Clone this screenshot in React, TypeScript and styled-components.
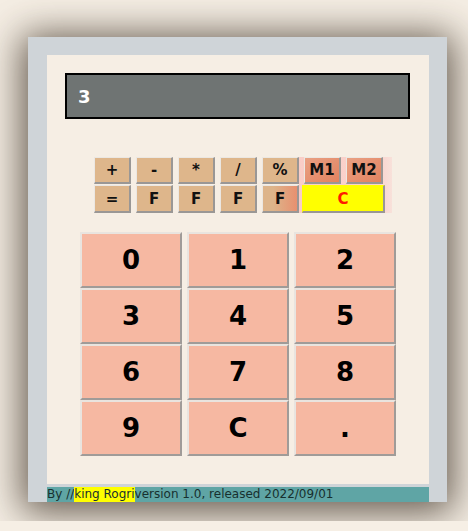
import React from "react";
import styled, { createGlobalStyle, css } from "styled-components";

const Global = createGlobalStyle`
  html, body { margin: 0; padding: 0; background: #f6efe5; }
  body { font-family: "DejaVu Sans", sans-serif; }
`;

const Stage = styled.div`
  height: 521px;
  box-sizing: border-box;
  padding: 37px 0 0 28px;
  overflow: hidden;
  background: #f5eee4;
`;

const Frame = styled.div`
  width: 419px;
  height: 465px;
  box-sizing: border-box;
  padding: 18px 18px 0 19px;
  background: #cfd4d8;
  box-shadow: 0 4px 36px 6px rgba(50, 38, 25, 0.75);
  display: flex;
  flex-direction: column;
`;

const Panel = styled.div`
  height: 429px;
  background: #f6eee4;
  box-sizing: border-box;
  padding: 18px 0 0 18px;
  display: flex;
  flex-direction: column;
`;

const Display = styled.div`
  width: 345px;
  height: 46px;
  box-sizing: border-box;
  border: 2px solid #000;
  background: #6f7473;
  color: #fff;
  font-weight: bold;
  font-size: 18px;
  display: flex;
  align-items: center;
  padding-left: 11px;
`;

const Ops = styled.div`
  margin: 38px 0 0 29px;
  width: 298px;
  box-sizing: border-box;
  padding-right: 9px;
  display: grid;
  grid-template-columns: repeat(7, 37px);
  grid-template-rows: 27px 28px;
  column-gap: 5px;
  row-gap: 1px;
  background: linear-gradient(
    to right,
    transparent 0 205px,
    #f9cdc7 205px,
    #fad3cd 285px,
    #f8e1da 298px
  );
`;

const bevel = css`
  box-sizing: border-box;
  border-style: solid;
  border-width: 1px 2px 2px 1px;
  border-color: #ebe7e2 #9a9795 #9a9795 #ebe7e2;
  display: flex;
  align-items: center;
  justify-content: center;
  font-weight: bold;
  font-family: "DejaVu Sans", sans-serif;
`;

const OpKey = styled.div<{ $tone?: "tan" | "mix" | "mem" }>`
  ${bevel};
  font-size: 15px;
  color: #111;
  background: ${(p) =>
    p.$tone === "mem"
      ? "linear-gradient(to bottom right, #e9a184, #e3825f)"
      : p.$tone === "mix"
      ? "linear-gradient(to right, #ddb48a 30%, #e8906f)"
      : "#deb68b"};
`;

const ClearKey = styled.div`
  ${bevel};
  grid-column: 6 / span 2;
  margin-left: -2px;
  margin-right: -2px;
  border-color: #ffff00 #9a9795 #9a9795 #ffff00;
  background: #ffff00;
  color: #ff1a00;
  font-size: 15px;
`;

const Pad = styled.div`
  margin: 19px 0 0 15px;
  display: grid;
  grid-template-columns: repeat(3, 102px);
  grid-auto-rows: 56px;
  column-gap: 5px;
`;

const PadKey = styled.div`
  ${bevel};
  border-width: 2px 2px 2px 2px;
  border-color: #e9e4df #a09b98 #a09b98 #e9e4df;
  background: #f6b8a2;
  color: #000;
  font-size: 26px;
`;

const Footer = styled.div`
  margin-top: 3px;
  height: 15px;
  background: #5fa5a5;
  color: #17302f;
  font-size: 12px;
  line-height: 15px;
  white-space: nowrap;
  display: flex;
`;

const Mark = styled.span`
  background: #ffff00;
`;

const ops1 = ["+", "-", "*", "/", "%"];
const digits = ["0", "1", "2", "3", "4", "5", "6", "7", "8", "9", "C", "."];

export default function App() {
  return (
    <>
      <Global />
      <Stage>
        <Frame>
          <Panel>
            <Display>3</Display>
            <Ops>
              {ops1.map((o) => (
                <OpKey key={o}>{o}</OpKey>
              ))}
              <OpKey $tone="mem">M1</OpKey>
              <OpKey $tone="mem">M2</OpKey>
              <OpKey>=</OpKey>
              <OpKey>F</OpKey>
              <OpKey>F</OpKey>
              <OpKey>F</OpKey>
              <OpKey $tone="mix">F</OpKey>
              <ClearKey>C</ClearKey>
            </Ops>
            <Pad>
              {digits.map((d) => (
                <PadKey key={d}>{d}</PadKey>
              ))}
            </Pad>
          </Panel>
          <Footer>
            <span>By //</span>
            <Mark>king Rogri</Mark>
            <span>version 1.0, released 2022/09/01</span>
          </Footer>
        </Frame>
      </Stage>
    </>
  );
}
